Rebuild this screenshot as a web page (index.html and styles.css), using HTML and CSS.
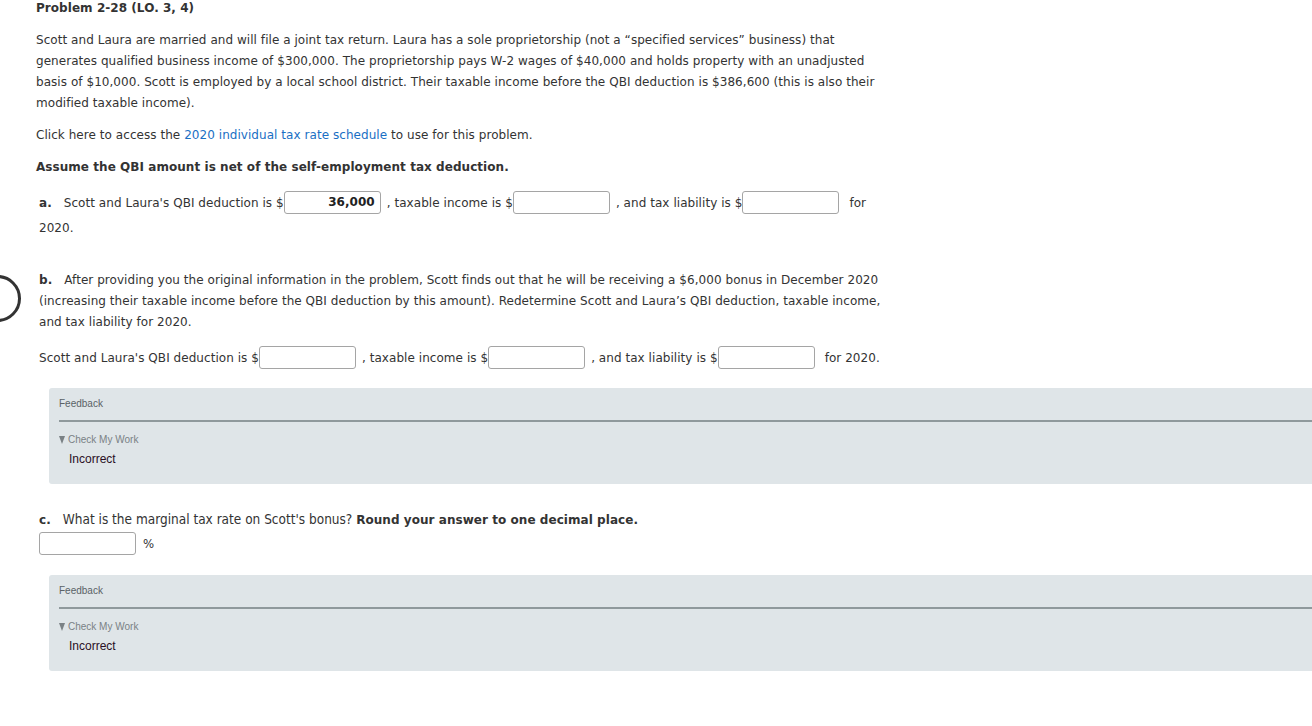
FILE: index.html
```html
<!DOCTYPE html>
<html>
<head>
<meta charset="utf-8">
<link rel="stylesheet" href="styles.css">
</head>
<body>
<div class="ring"></div>
<div class="page">
  <h1 class="title">Problem 2-28 (LO. 3, 4)</h1>
  <p class="para intro">Scott and Laura are married and will file a joint tax return. Laura has a sole proprietorship (not a “specified services” business) that generates qualified business income of $300,000. The proprietorship pays W-2 wages of $40,000 and holds property with an unadjusted basis of $10,000. Scott is employed by a local school district. Their taxable income before the QBI deduction is $386,600 (this is also their modified taxable income).</p>
  <p class="para click">Click here to access the <a class="link" href="#">2020 individual tax rate schedule</a> to use for this problem.</p>
  <p class="para assume">Assume the QBI amount is net of the self-employment tax deduction.</p>

  <div class="part part-a">
    <div class="line">
      <span class="lbl">a.</span>Scott and Laura's QBI deduction is $<span class="inp filled">36,000</span><span class="sp"></span>, taxable income is $<span class="inp"></span><span class="sp"></span>, and tax liability is $<span class="inp"></span><span class="sp2"></span>for
    </div>
    <div class="line second">2020.</div>
  </div>

  <div class="part part-b">
    <p class="bpara"><span class="lbl">b.</span>After providing you the original information in the problem, Scott finds out that he will be receiving a $6,000 bonus in December 2020 (increasing their taxable income before the QBI deduction by this amount). Redetermine Scott and Laura’s QBI deduction, taxable income, and tax liability for 2020.</p>
    <div class="line brow">Scott and Laura's QBI deduction is $<span class="inp"></span><span class="sp"></span>, taxable income is $<span class="inp"></span><span class="sp"></span>, and tax liability is $<span class="inp"></span><span class="sp2"></span>for 2020.</div>
  </div>

  <div class="feedback fb1">
    <div class="fb-head">Feedback</div>
    <div class="fb-body">
      <div class="cmw"><span class="tri"></span>Check My Work</div>
      <div class="result">Incorrect</div>
    </div>
  </div>

  <div class="part part-c">
    <div class="cq"><span class="lbl">c.</span><span class="narrow">What is the marginal tax rate on Scott's bonus?</span> <b>Round your answer to one decimal place.</b></div>
    <div class="crow"><span class="inp"></span><span class="pct">%</span></div>
  </div>

  <div class="feedback fb2">
    <div class="fb-head">Feedback</div>
    <div class="fb-body">
      <div class="cmw"><span class="tri"></span>Check My Work</div>
      <div class="result">Incorrect</div>
    </div>
  </div>
</div>
</body>
</html>
```

FILE: styles.css
```css
html, body {
  margin: 0;
  padding: 0;
  background: #ffffff;
  overflow: hidden;
}
body {
  font-family: "DejaVu Sans", Verdana, sans-serif;
  font-size: 12px;
  letter-spacing: 0.05px;
  color: #333333;
  width: 1312px;
  height: 726px;
  position: relative;
}
.ring {
  position: absolute;
  left: -26px;
  top: 275px;
  width: 41px;
  height: 41px;
  border: 3px solid #333;
  border-radius: 50%;
}
.page {
  padding-left: 36px;
  padding-top: 1px;
}
.title {
  margin: 0;
  font-size: 12px;
  font-weight: bold;
  line-height: 14px;
  color: #333;
}
.para {
  margin: 0;
  line-height: 21px;
}
.intro {
  margin-top: 15px;
  width: 850px;
}
.click {
  margin-top: 11px;
}
.link {
  color: #1a6fc4;
  text-decoration: none;
}
.assume {
  margin-top: 11px;
  font-weight: bold;
}
.lbl {
  font-weight: bold;
  margin-right: 12px;
}
.sp { display: inline-block; width: 6px; }
.sp2 { display: inline-block; width: 10px; }
.inp {
  display: inline-block;
  vertical-align: middle;
  box-sizing: border-box;
  width: 97px;
  height: 23px;
  border: 1px solid #a5a5a5;
  border-radius: 3px;
  background: #fff;
  margin-top: -3px;
}
.filled {
  text-align: right;
  font-weight: bold;
  padding-right: 5px;
  line-height: 21px;
  color: #222;
}
.part-a {
  margin-top: 13px;
  padding-left: 3px;
}
.part-a .line {
  line-height: 24px;
}
.part-a .second {
  margin-top: 1px;
}
.part-b {
  margin-top: 30px;
  padding-left: 3px;
}
.bpara {
  margin: 0;
  line-height: 21px;
  width: 850px;
}
.brow {
  margin-top: 13px;
  line-height: 24px;
}
.feedback {
  margin-left: 13px;
  background: #dfe5e8;
  border-radius: 3px 0 0 3px;
  height: 96px;
  font-family: "Liberation Sans", Arial, sans-serif;
  letter-spacing: 0;
  box-sizing: border-box;
  padding: 10px 0 0 10px;
}
.fb1 { margin-top: 18px; }
.fb2 { margin-top: 20px; }
.fb-head {
  font-size: 10px;
  color: #5a6266;
  line-height: 12px;
  padding-bottom: 10px;
  border-bottom: 2px solid #8f999c;
}
.fb-body {
  padding-top: 12px;
}
.cmw {
  font-size: 10px;
  color: #7a8185;
  line-height: 12px;
  display: flex;
  align-items: center;
}
.tri {
  display: inline-block;
  width: 0;
  height: 0;
  border-left: 3.5px solid transparent;
  border-right: 3.5px solid transparent;
  border-top: 8px solid #7a8185;
  margin-right: 3px;
  margin-top: -1px;
}
.result {
  font-size: 12px;
  color: #2a0f24;
  margin-left: 10px;
  margin-top: 6px;
  line-height: 14px;
}
.part-c {
  margin-top: 27px;
  padding-left: 3px;
}
.cq {
  line-height: 16px;
}
.narrow {
  font-family: "DejaVu Sans Condensed", "DejaVu Sans", sans-serif;
  font-size: 13.5px;
  letter-spacing: 0;
}
.crow {
  margin-top: 4px;
  height: 23px;
  display: flex;
  align-items: center;
}
.crow .inp { margin-top: 0; }
.pct {
  margin-left: 7px;
  font-family: "DejaVu Sans Condensed", "DejaVu Sans", sans-serif;
  font-size: 13px;
}
```
